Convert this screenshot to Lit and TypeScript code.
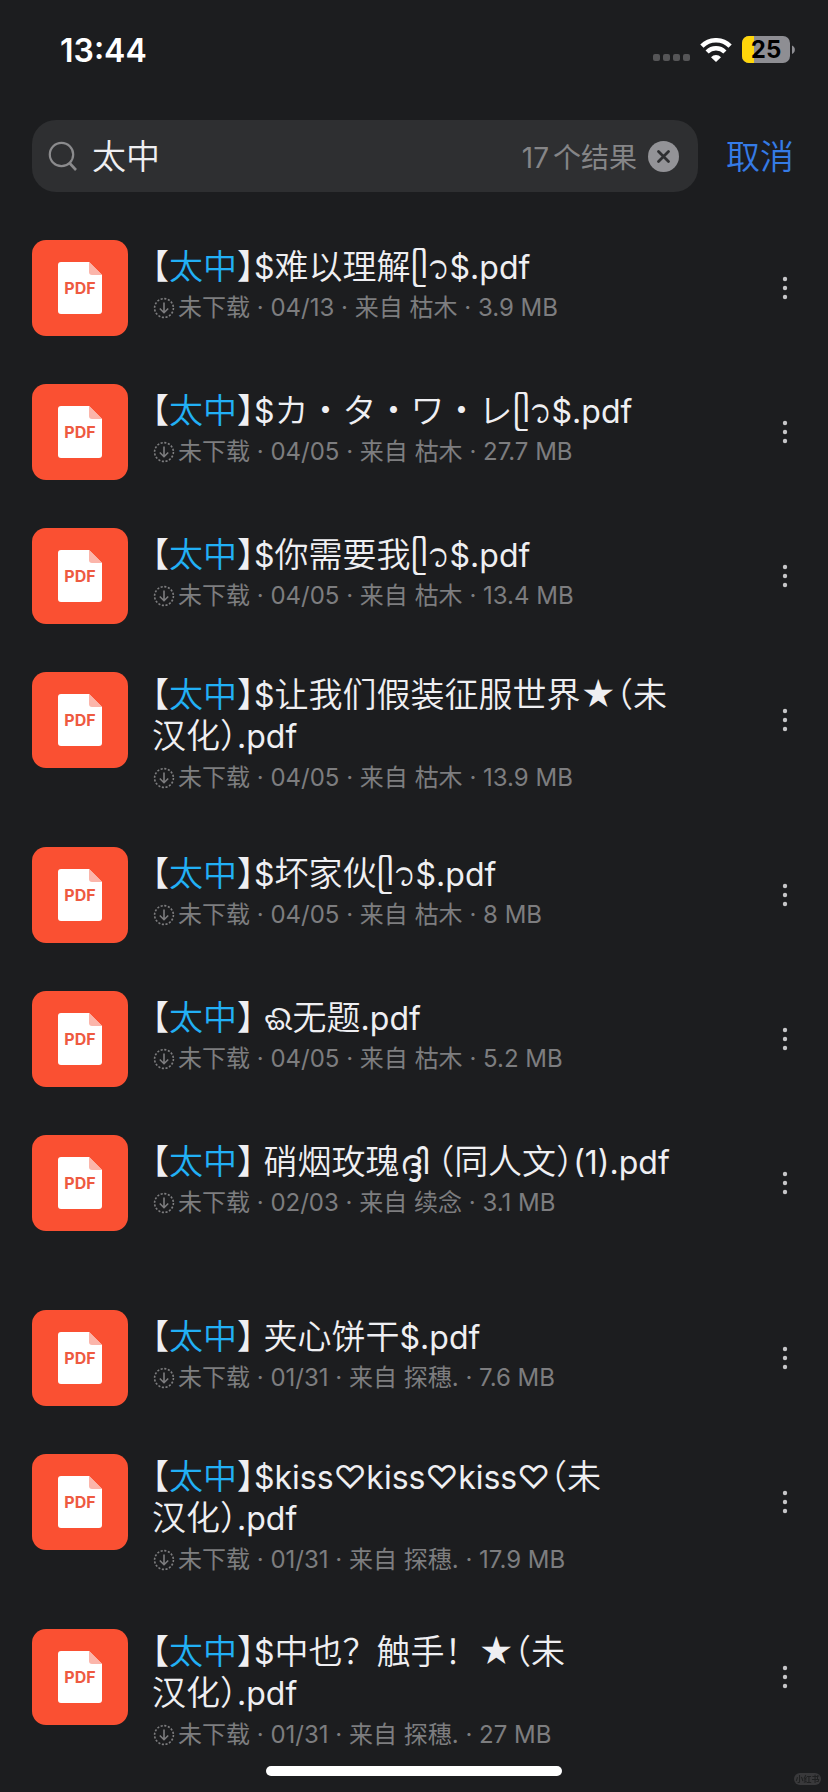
import { LitElement, html, css, svg } from "lit";
import { customElement } from "lit/decorators.js";

interface FileEntry {
  name: string;
  date: string;
  from: string;
  size: string;
  tall?: boolean;
}

const KEYWORD = "太中";

const FILES: FileEntry[] = [
  { name: "$难以理解ᥫ᭡$.pdf", date: "04/13", from: "枯木", size: "3.9 MB" },
  { name: "$カ・タ・ワ・レᥫ᭡$.pdf", date: "04/05", from: "枯木", size: "27.7 MB" },
  { name: "$你需要我ᥫ᭡$.pdf", date: "04/05", from: "枯木", size: "13.4 MB" },
  { name: "$让我们假装征服世界★（未\n汉化）.pdf", date: "04/05", from: "枯木", size: "13.9 MB", tall: true },
  { name: "$坏家伙ᥫ᭡$.pdf", date: "04/05", from: "枯木", size: "8 MB" },
  { name: " ଈ无题.pdf", date: "04/05", from: "枯木", size: "5.2 MB" },
  { name: " 硝烟玫瑰ദ്ദി （同人文）(1).pdf", date: "02/03", from: "续念", size: "3.1 MB", tall: true },
  { name: " 夹心饼干$.pdf", date: "01/31", from: "探穗.", size: "7.6 MB" },
  { name: "$kiss♡kiss♡kiss♡（未\n汉化）.pdf", date: "01/31", from: "探穗.", size: "17.9 MB", tall: true },
  { name: "$中也？触手！★（未\n汉化）.pdf", date: "01/31", from: "探穗.", size: "27 MB", tall: true },
];

@customElement("file-row")
export class FileRow extends LitElement {
  static properties = { file: { attribute: false } };
  declare file: FileEntry;

  static styles = css`
    :host { display: flex; align-items: flex-start; gap: 24px; }
    .thumb { flex: none; width: 96px; height: 96px; border-radius: 14px; background: #fa5032; }
    .thumb svg { display: block; }
    .mark { font: 700 16px Inter, sans-serif; fill: #ee5a41; }
    .info { flex: 1; min-width: 0; min-height: 96px; box-sizing: border-box; padding-top: 3px; }
    .info.tall { min-height: 127px; }
    .name {
      margin: 0; max-width: 540px; min-height: 48px; font-size: 34px; line-height: 40px;
      font-weight: 350; color: #efeff2; display: flex; align-items: center;
    }
    .name.wrapped { padding-bottom: 4px; }
    .label { white-space: pre-line; }
    .half { font-feature-settings: "halt"; }
    .latin { font-size: 32px; font-weight: 400; }
    .hit { color: #22b0f5; }
    .meta {
      display: flex; align-items: center; gap: 3px; margin: 0; padding-left: 1px; color: #7d7d7f;
      font-size: 24px; line-height: 34px; font-weight: 400; white-space: nowrap;
    }
    .more {
      flex: none; width: 32px; height: 96px; border: 0; padding: 0; background: none; color: #c6c6c8;
      display: grid; place-items: center;
    }
  `;

  private part(text: string) {
    if (/^[（）]$/.test(text)) return html`<span class="half">${text}</span>`;
    if (/^[!-~♡]+$/.test(text)) return html`<span class="latin">${text}</span>`;
    return text;
  }

  render() {
    const f = this.file;
    const parts = f.name.split(/([（）]|[!-~♡]+)/);
    return html`
      <div class="thumb">
        <svg width="96" height="96" viewBox="0 0 96 96" aria-hidden="true">
          <path d="M29 22H57L70 35V71a3 3 0 0 1-3 3H29a3 3 0 0 1-3-3V25a3 3 0 0 1 3-3z" fill="#fff" />
          <path d="M57 22L70 35H60a3 3 0 0 1-3-3z" fill="#fbb5aa" />
          <text class="mark" x="48" y="54" text-anchor="middle">PDF</text>
        </svg>
      </div>
      <div class="info ${f.tall ? "tall" : ""}">
        <h2 class="name ${f.name.includes("\n") ? "wrapped" : ""}"><span class="label"><span class="half">【</span><span class="hit">${KEYWORD}</span><span class="half">】</span>${parts.map((p) => this.part(p))}</span></h2>
        <p class="meta">
          <svg width="22" height="22" viewBox="0 0 22 22" fill="none" stroke="currentColor" aria-hidden="true">
            <circle cx="11" cy="11" r="9.4" stroke-width="1.6" stroke-dasharray="2.1 1.59" />
            <path d="M11 5.5V15.5M6.8 11.5L11 15.7L15.2 11.5" stroke-width="1.6" />
          </svg>
          <span>未下载 · ${f.date} · 来自 ${f.from} · ${f.size}</span>
        </p>
      </div>
      <button class="more" type="button" aria-label="更多">
        <svg width="6" height="24" viewBox="0 0 6 24" fill="currentColor" aria-hidden="true">
          <circle cx="3" cy="3" r="2.2" /><circle cx="3" cy="12" r="2.2" /><circle cx="3" cy="21" r="2.2" />
        </svg>
      </button>
    `;
  }
}

@customElement("app-root")
export class AppRoot extends LitElement {
  static styles = css`
    :host {
      display: block; min-height: 100vh; background: #1c1d1f; color: #efeff2; overflow: hidden;
      font-family: Inter, "Noto Sans CJK SC", "Noto Sans", sans-serif;
    }
    .status {
      display: flex; align-items: center; justify-content: space-between; height: 100px;
      padding: 0 32px 0 60px; box-sizing: border-box;
    }
    .time { font-size: 32px; font-weight: 600; color: #fff; }
    .signals { display: flex; align-items: center; gap: 10px; }
    .level { font: 700 24px Inter, sans-serif; fill: #000; }
    .searchbar { display: flex; align-items: center; padding: 20px 34px 0 32px; gap: 28px; }
    .field {
      flex: 1; min-width: 0; height: 72px; display: flex; align-items: center; box-sizing: border-box;
      border-radius: 24px; background: #2e2f31; padding: 0 19px 0 16px;
    }
    .field svg { flex: none; display: block; }
    .query {
      flex: 1; min-width: 0; border: 0; outline: 0; background: none; padding: 0 0 4px 14px;
      font: inherit; font-size: 34px; font-weight: 350; color: #efeff2;
    }
    .count { display: flex; align-items: baseline; gap: 4px; font-size: 28px; color: #858587; white-space: nowrap; }
    .clear { border: 0; padding: 0; margin-left: 11px; background: none; }
    .cancel {
      border: 0; padding: 0 0 4px; background: none; font: inherit; font-size: 34px; font-weight: 350; color: #357be6;
    }
    .list { list-style: none; margin: 0; padding: 48px 27px 60px 32px; display: flex; flex-direction: column; gap: 48px; }
    .home {
      position: fixed; left: 0; right: 0; bottom: 16px; margin: 0 auto; width: 296px; height: 10px;
      border-radius: 5px; background: #fff;
    }
    .badge {
      position: fixed; right: 7px; bottom: 7px; width: 27px; height: 12px; border-radius: 6px;
      background: #39393b; color: #202122; font-size: 8px; line-height: 12px; font-weight: 700; text-align: center;
    }
  `;

  render() {
    return html`
      <header class="status">
        <span class="time">13:44</span>
        <div class="signals">
          <svg width="37" height="24" viewBox="0 0 37 24" fill="#555557" aria-hidden="true">
            ${[0, 10, 20, 30].map((x) => svg`<rect x=${x} y="16" width="7" height="7" rx="2" />`)}
          </svg>
          <svg width="32" height="24" viewBox="0 0 32 24" fill="none" stroke="#fff" aria-hidden="true">
            <path d="M1.9 8.1A20 20 0 0 1 30.1 8.1" stroke-width="4.6" />
            <path d="M7.1 14A12.5 12.5 0 0 1 24.9 14" stroke-width="4.4" />
            <path d="M16 24L11 19.2A7 7 0 0 1 21 19.2Z" fill="#fff" stroke="none" />
          </svg>
          <svg width="54" height="28" viewBox="0 0 54 28" role="img" aria-label="25%">
            <clipPath id="cell"><rect x="0" y="0" width="48" height="27" rx="7" /></clipPath>
            <g clip-path="url(#cell)">
              <rect width="48" height="27" fill="#8e8e93" />
              <rect width="12" height="27" fill="#ffd60a" />
            </g>
            <path d="M50 9.5a4.6 4.6 0 0 1 0 8.5z" fill="#8e8e93" />
            <text class="level" x="24" y="22" text-anchor="middle">25</text>
          </svg>
        </div>
      </header>
      <div class="searchbar">
        <div class="field">
          <svg width="30" height="30" viewBox="0 0 30 30" fill="none" stroke="#8b8b8d" stroke-width="2.2" aria-hidden="true">
            <circle cx="13.5" cy="13.5" r="11.7" />
            <path d="M21.5 22L28 29" stroke-width="2.6" />
          </svg>
          <input class="query" type="text" aria-label="搜索" .value=${KEYWORD} />
          <span class="count"><span>17</span><span>个结果</span></span>
          <button class="clear" type="button" aria-label="清除">
            <svg width="31" height="31" viewBox="0 0 31 31" aria-hidden="true">
              <circle cx="15.5" cy="15.5" r="15.5" fill="#939397" />
              <path d="M10.5 10.5L20.5 20.5M20.5 10.5L10.5 20.5" stroke="#2e2f31" stroke-width="2.8" stroke-linecap="round" />
            </svg>
          </button>
        </div>
        <button class="cancel" type="button">取消</button>
      </div>
      <ul class="list">
        ${FILES.map((f) => html`<li><file-row .file=${f}></file-row></li>`)}
      </ul>
      <div class="home"></div>
      <div class="badge">小红书</div>
    `;
  }
}
